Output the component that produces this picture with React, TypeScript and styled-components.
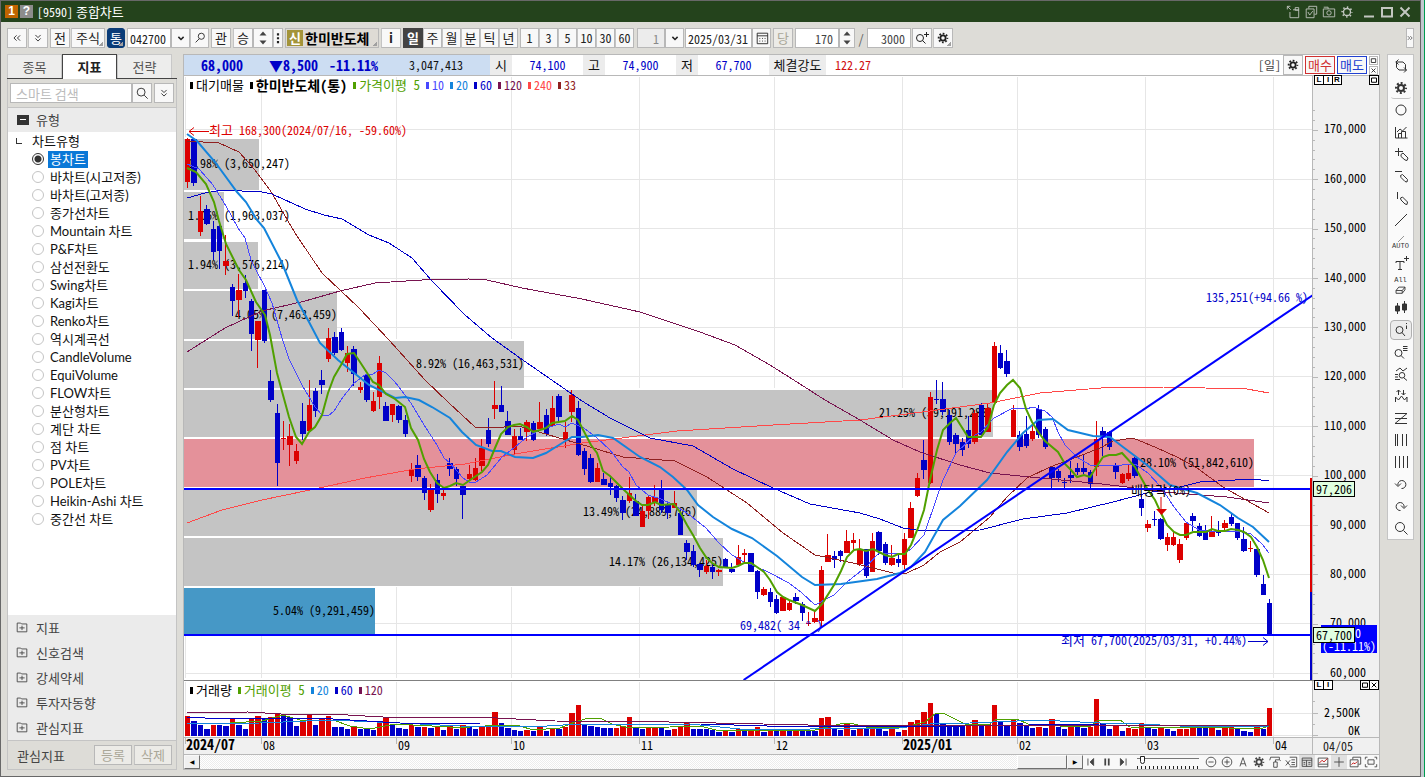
import React from "react";
import styled, { createGlobalStyle, css } from "styled-components";

const UI = '"Noto Sans CJK KR", sans-serif';
const MONO = '"Noto Sans Mono CJK KR", "Noto Sans CJK KR", monospace';

const RED = "#dc0000";
const BLUE = "#0000c8";

const GlobalStyle = createGlobalStyle`
  * { box-sizing: border-box; }
  body { margin: 0; background: #c4c8d0; font-family: ${UI}; font-size: 13px; color: #222; }
  button, input, select { font: inherit; color: inherit; margin: 0; padding: 0; border-radius: 0; }
  svg { display: block; }
`;

/* ---------- icons ---------- */

const ICONS: Record<string, React.ReactNode> = {
  gear: (
    <>
      <circle cx="8" cy="8" r="3" strokeWidth="2" />
      <circle cx="8" cy="8" r="5" strokeWidth="2" strokeDasharray="2 1.93" strokeDashoffset="1" />
    </>
  ),
  gearLine: (
    <>
      <circle cx="8" cy="8" r="4" strokeWidth="1.5" />
      <circle cx="8" cy="8" r="5.5" strokeWidth="2" strokeDasharray="1.6 2.72" strokeDashoffset="0.8" />
    </>
  ),
  left2: <path d="M7.5 5 4.5 8l3 3M11.5 5 8.5 8l3 3" />,
  right2: <path d="M4.5 5l3 3-3 3M8.5 5l3 3-3 3" />,
  down2: <path d="M5 4.5l3 3 3-3M5 8.500l3 3 3-3" />,
  chevron: <path d="M4.500 6.500 8 10l3.500-3.500" strokeWidth="2" />,
  searchLeft: <path d="M9.500 2.500a3.500 3.500 0 1 1 0 7 3.500 3.500 0 0 1 0-7zM7 9l-4 4" />,
  search: <path d="M7 2.500a4.500 4.500 0 1 1 0 9 4.500 4.500 0 0 1 0-9zM10.500 10.500l4 4" />,
  calendar: <path d="M2.500 2.500h12v12h-12zM2.500 5.500h12M5 8.500h1m2 0h1m2 0h1M5 11.500h1m2 0h1m2 0h1" />,
  zoomPlus: <path d="M6 4.500a3.500 3.500 0 1 1 0 7 3.500 3.500 0 0 1 0-7zM8.500 10.500l3 3M10 4.500h5M12.500 2v5" />,
  folderPlus: <path d="M2.500 3.500h4l1 1h6v9h-11zM5 9h6M8 6.500v5" />,
  popOut: <path d="M4.500 8v6.500h10v-9H8M1.500 1.500l4 4M1.500 5V1.500H5M10.500 3v3h4V3z" />,
  windows: <path d="M5.500 4V1.500h9v9H12M2.500 4.500h9v10h-9zM4.500 8 6.500 11.500l3.500-4.500" />,
  camera: <path d="M1.500 4.500h13v9h-13zM2 2.500h5v2M8 6.500a2.500 2.500 0 1 1 0 5 2.500 2.500 0 0 1 0-5" />,
  min: <path d="M3 12.500h10" strokeWidth="2" />,
  max: <path d="M3 4h10v8.500H3z" strokeWidth="2" />,
  close: <path d="M3.500 3.500l9 9M12.500 3.500l-9 9" strokeWidth="2" />,
  cycle: <path d="M3.500 4.500v5L6 12h7.500M12.500 11.500v-5L10 4H2.500M5.500 1.500 3 4l2.500 2.500M11 9.500l2.500 2.500-2.500 2.500" />,
  circle: <circle cx="8" cy="8" r="5" />,
  chartBars: <path d="M2.500 3v11h12M5.500 14V9.500h3V14M8.500 14V7.500h4V14M4 8l3-3 2.500 2 4-4" />,
  plusPen: <path d="M2 5.500h8M5.500 2v8M8 8.500l2-1.500 5 5-1 2.500-2-.5-4-3.500z" />,
  minusPen: <path d="M2 3.500h7M7.500 7.500l2-1 5 5-.5 2.500-2-.5-4-4z" />,
  linePen: <path d="M4.500 2v7M7.500 8l2-1 5 5-.5 2.500-2-.5-4-4z" />,
  slash: <path d="M2 14 14 2" />,
  textPlus: <path d="M3 5.500h8M3 5.500V7M11 5.500V7M7 5.500v8M5 13.500h4M11 2.500h5M13.500 0v5" />,
  eraser: <path d="M1.500 9.500l4-5h9v4l-4 5h-9zM1.500 9.500h9l4-5M10.500 9.500v4" strokeWidth="1.300" />,
  candles: <path d="M4.500 3v11M11.500 1v12M2.500 6h4v5h-4zM9.500 4h4v6h-4z" fill="#333" />,
  zoomInfo: <path d="M6.500 4.500a3.500 3.500 0 1 1 0 7 3.500 3.500 0 0 1 0-7zM9 10.500l3 3.500M13.500 3.500V7M13.500 1v1" />,
  zoomList: <path d="M5.500 5.500a3.500 3.500 0 1 1 0 7 3.500 3.500 0 0 1 0-7zM8 11.500l3 3M10 2.500h4.500M10 4.500h4.500M10 6.500h4.500" />,
  zoomWave: <path d="M3 5l4-3 3 3 4-3M9 6.500a2.800 2.800 0 1 1 0 5.600 2.800 2.800 0 0 1 0-5.600zM11 12l3 2.500M2 8.500h3M2 11h3M2 13.500h5" />,
  arrowsWave: <path d="M2.500 14V9l3 3 3-4 3 4 2.500-3v5M5.500 7V2M3.500 4l2-2 2 2M10.500 2v5M8.500 5l2 2 2-2" />,
  zigzag: <path d="M2 3.500h12M2 8.500h12M2 13.500h12M14 3.500l-12 10" />,
  bars4: <path d="M2.500 2v12M4.500 2v12M9.500 2v12M13.500 2v12" />,
  bars4b: <path d="M2.500 2v12M6.500 2v12M10.500 2v12M14.500 2v12" />,
  undo: <path d="M5 9.500a4 4 0 1 1 3.500 3M2 7.500 5 10.500 8 7.500" />,
  redo: <path d="M11 9.500a4 4 0 1 0-3.500 3M8 7.500l3 3 3-3" />,
  first: <path d="M4.500 4v8M11 4 7 8l4 4z" fill="#444" />,
  pause: <path d="M6 4v8M10 4v8" strokeWidth="2" />,
  last: <path d="M11.500 4v8M5 4l4 4-4 4z" fill="#444" />,
  zoomOut: <path d="M8 2.500a5.500 5.500 0 1 1 0 11 5.500 5.500 0 0 1 0-11zM5 8h6" />,
  zoomIn: <path d="M8 2.500a5.500 5.500 0 1 1 0 11 5.500 5.500 0 0 1 0-11zM5 8h6M8 5v6" />,
  letterA: <path d="M4.500 13 8 3l3.500 10M5.500 10h5" />,
  brush: <path d="M3 2.500h10v3H8.500V8M3 2.500 2 6M6.500 8h4v6h-4zM13 5.500l1.500 1" />,
  sheet: <path d="M6.500 2.500h8v11h-8M8.500 5.500h4M8.500 8.500h4M2 6l5 6M7 6l-5 6M8.500 11h4" />,
  table: <path d="M2.500 3.500h11v9.500h-11zM2.500 6h11M7.500 6v7M9.500 8.500h2.500M9.500 10.500h2.500M4 8.500h2M4 10.500h2" />,
  chartRed: (
    <>
      <path d="M2.500 3.500h11v10h-11zM2.500 10.500h11" />
      <path d="M4 9l3-3 2 2 4-4" stroke="#c00000" />
    </>
  ),
  plus: <path d="M2.500 8h11M8 2.500v11" />,
  chartStack: (
    <>
      <path d="M5.500 5V2.500h9v8H12M2.500 5.500h9v8h-9z" />
      <path d="M4 11l2-2 2 1 2.500-2.500" stroke="#c00000" />
    </>
  ),
  expand: <path d="M4.500 5.500h7v5h-7zM1.500 5V2.500H4M12 2.500h2.500V5M1.500 10.500v3H4M12 13.500h2.500v-3" />,
  updown: <path d="M8 1.500 11.500 5.500h-7zM8 14.500l3.500-4h-7z" fill="#444" stroke="none" />,
  dots: <path d="M8 2.500v2.500M8 7v2.500M8 11.500v2.500" strokeWidth="2.500" />,
};

const Glyph = styled.svg<{ $size: number }>`
  width: ${(p) => p.$size}px;
  height: ${(p) => p.$size}px;
  flex: none;
  fill: none;
  stroke: currentColor;
`;

const Icon = ({ name, size = 14 }: { name: string; size?: number }) => (
  <Glyph $size={size} viewBox="0 0 16 16" aria-hidden="true">
    {ICONS[name]}
  </Glyph>
);

/* ---------- window frame ---------- */

const Page = styled.div`
  height: 100vh;
  min-height: 620px;
  padding-right: 3px;
  border-right: 1px solid #009c50;
`;
const Window = styled.div`
  height: 100%;
  display: flex;
  flex-direction: column;
  border: 1px solid #686868;
  background: #dddcd7;
`;
const TitleBar = styled.header`
  height: 21px;
  flex: none;
  display: flex;
  align-items: center;
  padding: 0 6px 0 4px;
  background: #24431c;
  color: #fff;
`;
const Badge = styled.span<{ $bg: string }>`
  width: 13px;
  height: 13px;
  margin-right: 2px;
  display: grid;
  place-items: center;
  background: ${(p) => p.$bg};
  font: bold 12px/13px "Liberation Sans", sans-serif;
`;
const Title = styled.h1`
  flex: 1;
  margin: 0 0 0 2px;
  font: 400 13px/20px ${UI};
  span { font: 12px ${MONO}; }
`;
const TitleButton = styled.button<{ $gap?: boolean }>`
  width: 18px;
  height: 18px;
  margin-left: ${(p) => (p.$gap ? 4 : 0)}px;
  display: grid;
  place-items: center;
  border: 0;
  background: none;
  color: #c3c7c1;
`;

/* ---------- top tool bar ---------- */

const ToolBar = styled.div`
  height: 32px;
  flex: none;
  display: flex;
  align-items: center;
  padding: 0 6px;
`;
const Cluster = styled.div<{ $gap?: number; $ml?: number }>`
  display: flex;
  gap: ${(p) => p.$gap ?? 0}px;
  margin-left: ${(p) => p.$ml ?? 2}px;
`;
const ToolButton = styled.button<{ $w?: number; $look?: "dark" | "blue" | "off" | "stock"; $num?: boolean; $corner?: boolean }>`
  position: relative;
  width: ${(p) => p.$w ?? 20}px;
  height: 20px;
  flex: none;
  display: flex;
  align-items: center;
  justify-content: center;
  white-space: nowrap;
  border: 1px solid #b8b8b8;
  background: #f8f8f8;
  color: #222;
  line-height: 18px;
  & + & { border-left-color: #c4c4c4; }
  ${(p) => p.$num && css`font: 12px/18px ${MONO};`}
  ${(p) => p.$look === "dark" && css`background: #434343; border-color: #434343; color: #fff; font-weight: 700;`}
  ${(p) => p.$look === "blue" && css`background: #0a3c78; border-color: #0a3c78; color: #fff; && { border-radius: 3px; }`}
  ${(p) => p.$look === "off" && css`background: #ecebe7; color: #aaa798;`}
  ${(p) => p.$look === "stock" && css`background: #dedbd5; color: #000; font-size: 14px; font-weight: 700; justify-content: flex-start; gap: 2px;`}
  ${(p) => p.$corner && css`
    &::after {
      content: "";
      position: absolute;
      right: 1px;
      bottom: 1px;
      border: solid transparent;
      border-width: 4px 0 0 4px;
      border-bottom: 0;
      width: 4px;
      height: 4px;
      border-width: 0;
      background: linear-gradient(135deg, transparent 50%, #a0a0a0 50%);
    }
  `}
`;
const StockTag = styled.span`
  width: 16px;
  height: 16px;
  margin-left: 1px;
  text-align: center;
  background: #a39439;
  color: #fff;
  font-size: 13px;
  line-height: 15px;
`;
const Field = styled.input<{ $w: number; $align?: string }>`
  width: ${(p) => p.$w}px;
  height: 20px;
  flex: none;
  padding: 0 2px;
  border: 1px solid #b8b8b8;
  background: #fff;
  font-family: ${MONO};
  font-size: 12px;
  text-align: ${(p) => p.$align ?? "left"};
  ${(p) => p.$align === "right" && css`padding-right: 5px; color: #444;`}
  &:disabled { background: #ececec; color: #888; }
`;
const Slash = styled.span`
  width: 12px;
  text-align: center;
  color: #666;
`;
const Push = styled.span`flex: 1;`;

/* ---------- body ---------- */

const Body = styled.div`
  flex: 1;
  min-height: 0;
  display: grid;
  grid-template-columns: 170px minmax(0, 1fr) 27px;
  grid-template-rows: minmax(0, 1fr);
  padding: 0 6px 6px;
`;

const Sidebar = styled.aside`
  display: flex;
  flex-direction: column;
  min-height: 0;
  border-bottom: 1px solid #c4c4c4;
`;
const Tabs = styled.div`
  height: 25px;
  flex: none;
  display: flex;
  border-bottom: 1px solid #444;
`;
const Tab = styled.button<{ $on?: boolean }>`
  width: 55px;
  height: 24px;
  border: 1px solid #c8c8c8;
  border-bottom: 0;
  background: #ededec;
  color: #555;
  line-height: 20px;
  ${(p) => p.$on && css`height: 25px; background: #fff; border-color: #444; color: #222; font-weight: 700;`}
`;
const Panel = styled.div`
  flex: 1;
  min-height: 0;
  display: flex;
  flex-direction: column;
  border: solid #c4c4c4;
  border-width: 0 1px;
`;
const SearchRow = styled.form`
  height: 28px;
  flex: none;
  display: flex;
  align-items: center;
  padding: 0 3px 0 2px;
  input { width: 122px; padding: 0 5px; font: 13px ${UI}; }
  input::placeholder { color: #bbb; opacity: 1; }
`;
const Section = styled.button`
  height: 25px;
  flex: none;
  display: flex;
  align-items: center;
  gap: 7px;
  padding: 0 7px 1px;
  border: 0;
  background: #ebebeb;
  color: #444;
  text-align: left;
`;
const SectionHead = styled(Section)`border-top: 1px solid #c4c4c4;`;
const FolderSolid = styled.span`
  width: 12px;
  height: 10px;
  margin: 0 0 0 2px;
  display: grid;
  place-items: center;
  background: #333;
  &::after { content: ""; width: 6px; height: 1px; background: #fff; }
`;
const Tree = styled.div`
  flex: 1;
  min-height: 0;
  overflow: hidden;
  background: #fff;
  color: #111;
  font-family: Lato, ${UI};
`;
const TreeRoot = styled.div`
  height: 18px;
  display: flex;
  align-items: center;
  gap: 10px;
  padding-left: 8px;
  line-height: 18px;
  &::before { content: ""; width: 5px; height: 5px; border: solid #333; border-width: 0 0 1px 1px; }
`;
const TreeItem = styled.label<{ $on?: boolean }>`
  height: 18px;
  display: flex;
  align-items: center;
  gap: 4px;
  padding-left: 24px;
  span {
    padding: 0 2px;
    line-height: 17px;
    ${(p) => p.$on && css`background: #0a78d7; color: #fff;`}
  }
`;
const Radio = styled.input`
  appearance: none;
  width: 12px;
  height: 12px;
  border: 1px solid #c4c4c4;
  && { border-radius: 50%; }
  background: #fff;
  &:checked {
    border-color: #333;
    background: radial-gradient(circle, #333 0 3px, #fff 4px);
  }
`;
const SideFoot = styled.div`
  height: 29px;
  flex: none;
  display: flex;
  align-items: center;
  gap: 2px;
  padding: 0 4px 0 9px;
  border-top: 1px solid #c4c4c4;
  color: #444;
  span { flex: 1; }
`;

/* ---------- chart panel ---------- */

const Main = styled.main`
  min-width: 0;
  min-height: 0;
  margin: 0 7px 0 6px;
  display: flex;
  flex-direction: column;
  border: 1px solid #b8b8b8;
  background: #fff;
`;
const QuoteBar = styled.div`
  height: 21px;
  flex: none;
  display: flex;
  align-items: stretch;
  border-bottom: 1px solid #b8b8b8;
  font: 12px/20px ${MONO};
`;
const Summary = styled.div`
  width: 306px;
  display: flex;
  align-items: center;
  background: #ccddf2;
  color: ${BLUE};
  font-size: 14px;
  font-weight: 700;
`;
const SumCell = styled.span<{ $w: number; $plain?: boolean }>`
  width: ${(p) => p.$w}px;
  text-align: right;
  ${(p) => p.$plain && css`font-size: 12px; font-weight: 400; color: #111;`}
`;
const QName = styled.span<{ $w?: number }>`
  width: ${(p) => p.$w ?? 22}px;
  text-align: center;
  background: #ececec;
  color: #111;
  font: 13px/19px ${UI};
`;
const QValue = styled.span<{ $hot?: boolean }>`
  width: 71px;
  text-align: center;
  color: ${BLUE};
  ${(p) => p.$hot && css`padding-left: 9px; text-align: left; color: #d01010;`}
`;
const QTools = styled.div`
  margin-left: auto;
  display: flex;
  align-items: center;
  gap: 2px;
  color: #444;
`;
const TradeButton = styled.button<{ $c: string }>`
  width: 30px;
  height: 18px;
  border: 1px solid ${(p) => p.$c};
  background: #f8f8f8;
  color: ${(p) => p.$c};
  font: 13px/14px ${UI};
`;
const MiniStack = styled.div`
  display: grid;
  gap: 1px;
  margin-right: 1px;
`;
const MiniButton = styled.button`
  width: 9px;
  height: 9px;
  display: grid;
  place-items: center;
  border: 1px solid #b8b8b8;
  background: #fff;
  color: #222;
`;
const PaneRow = styled.div<{ $h?: number; $line?: string }>`
  position: relative;
  display: grid;
  grid-template-columns: minmax(0, 1fr) 66px;
  grid-template-rows: minmax(0, 1fr);
  border-bottom: 1px solid ${(p) => p.$line ?? "#b8b8b8"};
  ${(p) => (p.$h ? css`flex: none; height: ${p.$h}px;` : css`flex: 1; min-height: 0;`)}
`;
const Plot = styled.svg`
  width: 100%;
  height: 100%;
  font: 12px ${MONO};
`;
const Hangul = styled.tspan`font: 13px ${UI};`;
const Axis = styled(Plot)`
  width: 66px;
  background: #f0f0f0;
  box-shadow: -1px 0 0 #b8b8b8;
`;
const DateAxis = styled(Plot)`
  overflow: visible;
  background: #f0f0f0;
`;
const DateCell = styled.div`
  padding-left: 10px;
  background: #f0f0f0;
  box-shadow: -1px 0 0 #b8b8b8;
  font: 12px/16px ${MONO};
`;
const Legend = styled.div`
  position: absolute;
  top: 0;
  left: 6px;
  display: flex;
  gap: 6px;
  font: 12px/18px ${MONO};
`;
const Key = styled.span<{ $c: string; $size?: number }>`
  display: flex;
  align-items: center;
  gap: 3px;
  white-space: pre;
  color: ${(p) => p.$c};
  font-size: ${(p) => p.$size ?? 12}px;
  font-weight: ${(p) => (p.$size === 14 ? 700 : 400)};
  &::before { content: ""; width: 3px; height: 7px; background: currentColor; }
`;
const PaneTags = styled.div<{ $side: "left" | "right" }>`
  position: absolute;
  top: -1px;
  ${(p) => (p.$side === "left" ? "right: 37px; width: 28px;" : "right: 0;")}
  display: flex;
`;
const PaneTag = styled.button`
  width: 10px;
  height: 10px;
  margin-right: -1px;
  display: grid;
  place-items: center;
  border: 1px solid #000;
  background: #fff;
  color: #000;
  font: bold 8px/8px "Liberation Sans", sans-serif;
  &:last-child { margin-right: 0; }
`;

/* ---------- bottom bar ---------- */

const BottomBar = styled.div`
  height: 14px;
  flex: none;
  display: flex;
  background: #f8f8f8;
  color: #444;
`;
const ScrollArrow = styled.button`
  width: 16px;
  height: 14px;
  display: grid;
  place-items: center;
  border: 1px solid #f8f8f8;
  border-right-color: #707070;
  border-bottom-color: #707070;
  background: #f0f0f0;
  color: #000;
  font: 6px/10px "DejaVu Sans", sans-serif;
`;
const ScrollTrack = styled.div`
  flex: 1;
  display: flex;
  justify-content: flex-end;
  background: repeating-conic-gradient(#ececec 0 25%, #fff 0 50%) 0 0 / 2px 2px;
`;
const ScrollThumb = styled.div`
  width: 50px;
  border: 1px solid #fff;
  border-right-color: #707070;
  border-bottom-color: #707070;
  background: #f0f0f0;
`;
const BarButton = styled.button<{ $on?: boolean }>`
  width: 16px;
  height: 14px;
  display: grid;
  place-items: center;
  border: 0;
  background: ${(p) => (p.$on ? "#e0e0e0" : "none")};
`;
const Slider = styled.input`
  appearance: none;
  width: 62px;
  height: 14px;
  margin: 0 4px 0 6px;
  background:
    linear-gradient(#777, #777) 0 3px / 100% 1px no-repeat,
    repeating-linear-gradient(90deg, #222 0 1px, transparent 1px 4px) 0 11px / 100% 3px no-repeat;
  &::-webkit-slider-thumb {
    appearance: none;
    width: 5px;
    height: 8px;
    margin-top: -4px;
    border: 1px solid #222;
    background: #fff;
    border-radius: 0 0 3px 3px;
  }
`;

/* ---------- drawing tools ---------- */

const DrawBar = styled.nav`
  align-self: start;
  display: flex;
  flex-direction: column;
  align-items: center;
  border: 1px solid #c4c4c4;
  background: #fafafa;
`;
const DrawButton = styled.button<{ $on?: boolean; $line?: boolean }>`
  width: 22px;
  height: 20px;
  margin: 1px 0;
  display: flex;
  flex-direction: column;
  align-items: center;
  justify-content: center;
  border: 1px solid ${(p) => (p.$on ? "#b0b0b0" : "transparent")};
  && { border-radius: 4px; }
  background: ${(p) => (p.$on ? "#ececec" : "none")};
  color: #333;
  font: 7px/7px "Liberation Mono", monospace;
  ${(p) => p.$line && css`box-shadow: 0 2px 0 -1px #c4c4c4;`}
`;

/* ---------- data ---------- */

const STEP = 6.402;
const X0 = 187;
const BARS = 170;

// Each candle: direction, then the screen rows of high, body top, body bottom and low.
const CANDLES = `
r138,139,182,188 b139,139,183,186 r196,211,232,236 b205,209,224,225 b221,229,252,260 b225,226,251,269 r235,261,266,275
b284,287,301,316 r274,290,300,317 b275,283,291,298 b299,301,334,351 r321,321,340,368 b290,290,341,343 b370,381,400,402
b404,413,463,486 r421,438,439,450 r424,436,445,466 r444,451,461,464 b403,421,434,440 r380,405,431,432 b388,391,411,417
b370,380,385,394 r328,338,359,362 b332,337,353,355 b328,332,350,351 r346,353,363,372 b346,349,374,386 r382,387,390,393
b375,375,400,402 r392,401,411,412 r356,363,397,409 b402,406,421,421 r404,404,415,422 b405,406,420,423 b415,420,434,437
r463,470,476,482 b455,465,477,481 b476,478,493,500 r484,488,510,512 b474,480,494,503 r489,493,496,500 b458,463,469,476
b467,469,479,486 b486,486,495,519 r465,474,479,480 r458,468,480,481 r439,448,466,471 b418,430,444,447 r381,405,409,419
b386,405,412,412 b411,421,435,435 r429,436,450,455 b428,436,440,440 r420,422,432,441 b421,423,440,441 r402,422,429,429
b409,415,434,436 r396,408,426,426 b394,396,417,423 r422,432,440,448 r390,395,412,422 b401,408,455,456 b448,451,469,475
b454,458,482,483 r463,468,482,482 b473,479,485,485 b476,483,487,495 b485,486,498,502 b496,500,513,520 r477,493,501,503
b494,501,516,516 r506,511,527,527 r496,497,511,519 r485,497,502,506 b480,490,510,513 b501,504,513,519 r491,503,508,508
b508,513,535,535 b540,543,552,560 b545,551,565,567 b563,564,570,577 r560,566,572,574 b563,567,572,579 r569,570,572,576
b558,559,567,567 b563,569,572,573 r545,557,565,565 r549,553,555,563 b553,553,572,572 b570,571,592,599 r587,589,595,596
b588,592,602,607 b595,599,613,614 r597,597,611,611 r601,603,610,611 b593,597,601,604 b602,604,613,621 r612,623,624,626
r611,618,622,623 r566,570,621,628 r534,555,562,562 b551,556,560,568 b550,551,556,562 r530,541,553,553 r533,540,543,550
r539,549,564,566 b549,549,576,578 r533,541,572,572 b531,532,551,555 b542,544,563,565 r545,558,565,566 b553,559,563,567
r533,539,565,569 r502,508,538,538 r473,478,496,497 b440,460,470,479 r392,397,483,484 b380,399,400,404 b382,399,412,415
b410,415,442,445 b433,435,444,453 b438,442,450,456 b416,430,444,448 r410,413,442,444 b403,405,435,436 r403,408,432,432
r342,346,403,403 b345,353,368,369 b350,361,374,377 r405,410,437,437 b431,435,447,451 b416,434,446,448 r422,431,439,441
b405,409,435,438 b427,429,447,449 b466,467,478,488 b469,471,478,482 b478,482,483,488 b461,475,478,483 b463,468,472,475
b455,468,472,474 b470,472,484,488 r421,439,467,476 b427,431,437,456 b431,432,447,450 b463,466,472,479 r473,474,483,484
r465,473,479,481 b457,458,476,478 b495,499,508,516 r520,524,528,532 b511,519,520,526 b518,519,539,540 r533,537,545,551
r532,537,545,546 r539,544,560,563 r523,523,538,540 b513,516,521,531 b523,526,536,537 b525,530,540,540 r516,532,537,537
b521,531,533,536 r520,523,528,531 b514,517,524,526 b523,523,538,540 b527,539,551,552 r541,548,549,552 b549,549,575,577
b575,584,595,595 b599,603,634,634`
  .trim()
  .split(/\s+/)
  .map((c) => ({ up: c[0] === "r", v: c.slice(1).split(",").map(Number) }));

const VOLUMES = `
r20 b15 b11 b7 r11 b11 b10 r17 b11 b7 r17 r20 b18 r19 r23 b20 b19 b10 r16 r21 b11 r17 r20 b9 b9 b7 r9 b7 b7 b6 r15 r19 b11 b8 b7
r11 b9 r9 b8 r10 b6 r11 b7 r11 b9 b7 r9 r11 r24 b13 b8 b6 b5 r6 b5 r9 b5 r8 b7 r9 r23 r31 b12 b10 b9 b8 b8 r8 r10 r19 b9 b7 r8 r8
b8 b6 r7 r9 r13 b7 b7 b7 b6 b4 r5 b4 r7 b5 r5 r9 b4 r6 b5 r6 b5 r6 b5 b5 b5 r18 r19 b7 b6 r13 b6 r7 b7 r10 b7 b5 r7 b4 r6 r14 r16
r24 r33 b22 b12 b11 b11 b10 r12 r16 b11 r12 r31 b15 b10 r16 b13 b10 b8 r9 b8 r17 b9 b7 r10 b9 b8 r9 r37 b13 b7 r10 b5 r8 r7 r13
b8 b7 r9 b7 b5 r7 r7 r10 b9 b9 r10 b6 r8 r10 b7 b5 b4 r10 b7 r28`
  .trim()
  .split(/\s+/)
  .map((c) => ({ up: c[0] === "r", h: Number(c.slice(1)) }));

const AVERAGES: { c: string; w: number; p: string }[] = [
  { c: "#ff4848", w: 1, p: "187,523 222,510 262,500 310,490 365,478 415,469 465,464 515,454 582,443 677,431 773,425 860,420 930,411 990,403 1040,393 1113,387 1163,387 1247,389 1269,393" },
  { c: "#781450", w: 1, p: "187,352 225,328 262,311 305,301 340,291 375,283 422,280 469,279 487,280 522,288 582,299 640,312 700,332 735,345 770,365 800,384 825,400 860,420 893,440 920,452 960,465 990,473 1040,478 1093,483 1127,487 1163,492 1227,497 1269,503" },
  { c: "#902020", w: 1, p: "187,141 219,143 239,152 255,170 270,190 295,233 322,273 359,308 389,340 425,380 449,403 475,427 489,428 519,426 549,435 590,447 623,457 675,461 707,477 747,503 783,533 815,555 853,563 893,573 907,573 924,565 940,552 960,542 990,517 1007,497 1027,478 1050,467 1077,457 1100,448 1113,441 1133,438 1157,448 1177,457 1197,468 1223,487 1269,513" },
  { c: BLUE, w: 1, p: "187,198 205,193 222,190 262,192 272,194 305,209 324,215 342,219 369,235 389,243 412,258 432,281 465,315 492,338 520,358 582,401 610,418 650,438 693,446 733,469 773,488 810,504 860,513 880,519 903,528 923,531 980,530 1023,519 1067,513 1113,502 1147,493 1180,487 1200,482 1253,479 1269,481" },
  { c: "#4848ff", w: 1, p: "187,164 199,169 207,178 213,185 226,206 238,228 245,238 251,260 257,272 264,285 272,303 282,338 289,359 302,385 315,407 322,415 328,416 334,411 341,400 347,392 354,383 365,375 373,374 379,370 386,373 395,382 411,403 424,425 437,445 444,458 450,463 463,478 469,482 476,482 487,475 502,457 515,447 527,437 540,430 559,424 565,427 572,423 584,428 597,438 610,450 623,467 629,472 636,485 648,495 661,499 674,505 687,513 706,528 719,543 732,555 744,562 757,567 770,573 789,583 802,593 815,605 834,595 847,582 866,567 879,553 905,553 911,549 924,535 937,497 943,480 956,453 975,435 981,432 994,418 1013,408 1026,409 1033,407 1045,411 1052,417 1058,432 1065,445 1077,457 1090,465 1109,466 1135,464 1148,473 1161,487 1174,507 1186,522 1199,530 1218,532 1238,531 1251,534 1263,545 1269,553" },
  { c: "#1484dc", w: 2, p: "187,134 197,141 215,162 237,192 246,202 257,220 264,228 282,263 297,300 309,322 320,343 338,360 369,385 395,398 405,397 419,400 432,407 450,418 462,432 476,445 492,451 501,451 515,457 533,458 546,453 559,445 572,437 582,437 598,435 613,438 640,457 660,467 673,477 687,490 698,505 713,517 732,529 752,538 777,556 802,577 815,585 841,584 877,579 900,573 911,567 925,552 943,520 960,506 987,480 1007,452 1023,433 1038,420 1053,419 1068,430 1093,436 1110,437 1123,447 1147,465 1170,485 1197,493 1220,505 1238,518 1253,527 1269,542" },
  { c: "#50a000", w: 2, p: "187,168 196,172 206,184 214,202 219,221 226,244 239,270 246,280 256,302 265,315 270,335 277,373 289,417 296,437 302,444 309,432 315,427 322,415 328,393 334,377 341,365 347,354 354,353 360,362 373,382 379,385 386,394 395,399 405,407 411,428 418,440 424,459 430,472 437,483 444,488 450,486 456,483 463,485 476,476 482,472 488,465 495,448 501,434 508,427 514,425 520,424 527,427 533,432 540,430 546,428 552,423 565,421 572,416 578,420 591,445 597,453 603,471 610,476 623,489 636,501 642,505 648,505 655,502 661,505 674,504 680,512 687,525 693,535 700,548 706,557 712,563 719,567 732,568 738,566 744,563 751,563 757,567 764,572 770,580 777,592 783,597 789,600 802,605 815,611 822,604 834,585 841,571 847,557 854,550 860,549 866,551 873,549 879,552 885,555 892,557 898,554 905,554 911,545 918,528 924,510 930,480 937,450 943,430 950,423 956,418 968,437 981,437 988,427 994,405 1000,393 1007,385 1013,380 1020,388 1026,409 1032,422 1039,433 1045,441 1058,452 1065,464 1071,470 1077,477 1084,475 1090,477 1097,466 1103,457 1109,455 1116,455 1122,453 1135,467 1148,490 1155,500 1161,513 1167,525 1174,532 1180,535 1186,535 1193,532 1206,532 1212,529 1218,531 1225,531 1231,529 1238,530 1244,532 1251,537 1257,547 1263,560 1269,578" },
];

const VOLUME_AVERAGES = [
  { c: "#50a000", p: "187,724 230,723 262,721 283,715 300,720 333,720 350,726 370,729 395,724 450,727 470,727 500,725 520,726 533,730 560,728 575,722 585,719 600,718 612,724 630,728 670,727 700,726 720,731 760,730 815,730 840,724 850,723 870,728 905,727 925,722 936,713 945,714 965,724 990,724 995,720 1017,719 1030,725 1090,727 1098,720 1120,720 1130,727 1180,728 1200,727 1230,728 1260,729 1269,726" },
  { c: "#1484dc", p: "187,724 260,723 330,720 400,723 460,726 530,727 580,724 640,725 690,724 740,729 810,729 900,728 930,724 970,723 1040,720 1100,723 1140,724 1200,727 1269,726" },
  { c: BLUE, p: "187,717 223,719 283,718 333,719 400,723 480,724 700,724 800,727 960,726 1100,724 1269,724" },
  { c: "#781450", p: "187,713 248,712 281,714 330,714 383,717 477,717 555,721 669,722 763,724 808,725 1269,725" },
];

// Price-band profile: top, bottom, right edge, label, label row, colour.
const PROFILE: [number, number, number, string, number, string?][] = [
  [139, 190, 259, "1.98% (3,650,247)", 168],
  [192, 239, 224, "1.06% (1,963,037)", 220],
  [242, 289, 258, "1.94% (3,576,214)", 269],
  [291, 339, 337, "4.05% (7,463,459)", 319],
  [341, 388, 524, "8.92% (16,463,531)", 368],
  [390, 437, 993, "21.25% (39,191,283)", 417],
  [439, 487, 1254, "28.10% (51,842,610)", 467, "#e4919a"],
  [489, 536, 697, "13.49% (24,889,726)", 516],
  [538, 586, 723, "14.17% (26,134,425)", 566],
  [588, 635, 375, "5.04% (9,291,459)", 615, "#4698c6"],
];

const MONTHS: [number, string][] = [
  [185, "2024/07"], [261, "08"], [396, "09"], [511, "10"], [639, "11"],
  [774, "12"], [902, "2025/01"], [1017, "02"], [1145, "03"], [1273, "04"],
];
const PRICES: [number, string][] = [
  [129, "170,000"], [179, "160,000"], [228, "150,000"], [278, "140,000"], [327, "130,000"], [376, "120,000"],
  [426, "110,000"], [475, "100,000"], [525, "90,000"], [574, "80,000"], [623, "70,000"], [673, "60,000"],
];

const CHART_TYPES = [
  "봉차트", "바차트(시고저종)", "바차트(고저종)", "종가선차트", "Mountain 차트", "P&F차트", "삼선전환도", "Swing차트",
  "Kagi차트", "Renko차트", "역시계곡선", "CandleVolume", "EquiVolume", "FLOW차트", "분산형차트", "계단 차트", "점 차트",
  "PV차트", "POLE차트", "Heikin-Ashi 차트", "중간선 차트",
];

const barLeft = (i: number) => Math.round(X0 - 2 + STEP * i);
const barWidth = (i: number) => barLeft(i + 1) - barLeft(i) - 1;

/* ---------- chart parts ---------- */

const PricePlot = () => (
  <Plot viewBox="184 76 1129 604" preserveAspectRatio="xMinYMin meet" role="img" aria-label="가격 차트">
    <g stroke="#e6e6e6" shapeRendering="crispEdges">
      {MONTHS.map(([x]) => <line key={x} x1={x + 0.5} x2={x + 0.5} y1="77" y2="678" />)}
      {PRICES.map(([y]) => <line key={y} x1="185" x2="1313" y1={y + 0.5} y2={y + 0.5} />)}
    </g>
    {PROFILE.map(([top, bottom, right, label, row, color]) => (
      <g key={label}>
        <rect x="184" y={top - 2} width={right - 184} height={bottom - top + 3} fill="#fff" />
        <rect x="184" y={top} width={right - 184} height={bottom - top} fill={color ?? "#c4c4c4"} />
        <text x={Math.max(right, 290)} y={row} textAnchor="end">{label}</text>
      </g>
    ))}
    <g shapeRendering="crispEdges">
      {CANDLES.map(({ up, v }, i) => (
        <g key={i} fill={up ? RED : BLUE}>
          <rect x={barLeft(i) + 2} y={v[0]} width="1" height={v[3] - v[0]} />
          <rect x={barLeft(i)} y={v[1]} width={barWidth(i)} height={v[2] - v[1]} />
        </g>
      ))}
    </g>
    <g fill="none">
      {AVERAGES.map((a) => (
        <polyline
          key={a.c}
          points={a.p}
          stroke={a.c}
          strokeWidth={a.w}
          shapeRendering={a.w === 1 ? "crispEdges" : "auto"}
        />
      ))}
    </g>
    <g fill={RED}>
      <path d="M209 131.500H189M194 127.500l-5 4 5 4" fill="none" stroke={RED} />
      <text x="209" y="135"><Hangul>최고</Hangul> 168,300(2024/07/16, -59.60%)</text>
      <path d="M1161 497v13" stroke={RED} />
      <path d="M1156 509h11l-5.500 6z" />
    </g>
    <text x="1131" y="495"><Hangul>배당락</Hangul>(0%)</text>
    <g fill={BLUE}>
      <text x="1308" y="302" textAnchor="end">135,251(+94.66 %)</text>
      <text x="740" y="630">69,482( 34 ° )</text>
      <text x="1061" y="645"><Hangul>최저</Hangul> 67,700(2025/03/31, +0.44%)</text>
      <path d="M1248 641.500h20M1263 637.500l5 4-5 4" fill="none" stroke={BLUE} />
    </g>
    <g fill="none" stroke="#0000ff" strokeWidth="2">
      <path d="M184 489h1129M184 635h1129" shapeRendering="crispEdges" />
      <path d="M743.600 680 1313 295" />
    </g>
    <rect x="1310" y="478" width="3" height="114" fill={RED} />
    <rect x="1310" y="592" width="3" height="88" fill={BLUE} />
  </Plot>
);

const PriceAxis = () => (
  <Axis viewBox="1313 76 66 604" preserveAspectRatio="xMinYMin meet" role="img" aria-label="가격 축">
    <g stroke="#b8b8b8" shapeRendering="crispEdges">
      {Array.from({ length: 58 }, (_, i) => {
        const y = Math.round(110 + i * 9.88) + 0.5;
        return <line key={i} x1="1313" x2={i % 5 === 2 ? 1318 : 1315} y1={y} y2={y} />;
      })}
    </g>
    {PRICES.map(([y, t]) => <text key={t} x="1366" y={y + 4} textAnchor="end">{t}</text>)}
    <rect x="1321" y="625" width="56" height="28" fill="#00f" />
    <text x="1361" y="638" fill="#fff" textAnchor="end">67,700</text>
    <text x="1376" y="651" fill="#fff" textAnchor="end">(-11.11%)</text>
    <g shapeRendering="crispEdges">
      <rect x="1313.500" y="481.500" width="41" height="15" fill="#e0ffe0" stroke="#000" />
      <rect x="1313.500" y="627.500" width="41" height="15" fill="#e0ffe0" stroke="#000" />
    </g>
    <text x="1316" y="494">97,206</text>
    <text x="1316" y="640">67,700</text>
  </Axis>
);

const VolumePlot = () => (
  <Plot viewBox="184 681 1129 56" preserveAspectRatio="xMinYMax meet" role="img" aria-label="거래량 차트">
    <g stroke="#e6e6e6" shapeRendering="crispEdges">
      {MONTHS.map(([x]) => <line key={x} x1={x + 0.5} x2={x + 0.5} y1="682" y2="737" />)}
      <line x1="185" x2="1313" y1="713.500" y2="713.500" />
      <line x1="185" x2="1313" y1="735.500" y2="735.500" />
    </g>
    <g shapeRendering="crispEdges">
      {VOLUMES.slice(0, BARS).map(({ up, h }, i) => (
        <rect key={i} x={barLeft(i)} y={736 - h} width={barWidth(i)} height={h} fill={up ? RED : BLUE} />
      ))}
      {VOLUME_AVERAGES.map((a) => <polyline key={a.c} points={a.p} stroke={a.c} fill="none" />)}
    </g>
  </Plot>
);

const VolumeAxis = () => (
  <Axis viewBox="1313 681 66 56" role="img" aria-label="거래량 축">
    <path d="M1313 701.500h2M1313 713.500h5M1313 724.500h2M1313 735.500h5" stroke="#b8b8b8" />
    <text x="1360" y="717" textAnchor="end">2,500K</text>
    <text x="1360" y="735" textAnchor="end">0K</text>
  </Axis>
);

const Dates = () => (
  <DateAxis viewBox="184 738 1129 16" preserveAspectRatio="xMinYMin meet" role="img" aria-label="날짜 축">
    {MONTHS.map(([x, t]) => (
      <g key={x}>
        <line x1={x + 0.5} x2={x + 0.5} y1="738" y2="744" stroke="#b8b8b8" />
        <text
          x={x + (t.length > 2 ? 1 : 2)}
          y="750"
          fontWeight={t.length > 2 ? 700 : 400}
          fontSize={t.length > 2 ? 14 : 12}
        >
          {t}
        </text>
      </g>
    ))}
  </DateAxis>
);

/* ---------- page ---------- */

const DRAW_TOOLS = [
  "cycle", "gear", "circle", "chartBars", "plusPen", "minusPen", "linePen", "slash", "auto", "textPlus", "all",
  "candles", "zoomInfo", "zoomList", "zoomWave", "arrowsWave", "zigzag", "bars4", "bars4b", "undo", "redo", "search",
];
const BOTTOM_TOOLS = [
  "zoomOut", "zoomIn", "letterA", "gear", "brush", "sheet", "table", "chartRed", "plus", "chartStack", "expand",
];
const TITLE_TOOLS = ["popOut", "windows", "camera", "gearLine"];

const drawContent = (name: string) => {
  if (name === "auto") return <><Icon name="slash" size={8} />AUTO</>;
  if (name === "all") return <>All<Icon name="eraser" size={11} /></>;
  return <Icon name={name} size={16} />;
};

export default function App() {
  return (
    <Page>
      <GlobalStyle />
      <Window>
        <TitleBar>
          <Badge $bg="#c06400">1</Badge>
          <Badge $bg="#8c8c8c">?</Badge>
          <Title><span>[9590]</span> 종합차트</Title>
          {TITLE_TOOLS.map((n) => <TitleButton key={n} aria-label={n}><Icon name={n} /></TitleButton>)}
          <TitleButton $gap aria-label="최소화"><Icon name="min" size={16} /></TitleButton>
          <TitleButton aria-label="최대화"><Icon name="max" size={16} /></TitleButton>
          <TitleButton aria-label="닫기"><Icon name="close" size={16} /></TitleButton>
        </TitleBar>

        <ToolBar>
          <Cluster $gap={1} $ml={0}>
            <ToolButton aria-label="접기"><Icon name="left2" /></ToolButton>
            <ToolButton aria-label="펼치기"><Icon name="down2" /></ToolButton>
          </Cluster>
          <Cluster $gap={1}>
            <ToolButton>전</ToolButton>
            <ToolButton $w={34} $corner>주식</ToolButton>
          </Cluster>
          <Cluster><ToolButton $w={18} $look="blue" $corner>통</ToolButton></Cluster>
          <Cluster>
            <Field $w={44} defaultValue="042700" aria-label="종목코드" />
            <ToolButton $w={19} aria-label="종목 목록"><Icon name="chevron" size={12} /></ToolButton>
            <ToolButton $w={19} aria-label="종목 검색"><Icon name="searchLeft" /></ToolButton>
          </Cluster>
          <Cluster $gap={2}>
            <ToolButton>관</ToolButton>
            <ToolButton>승</ToolButton>
          </Cluster>
          <Cluster $ml={0}>
            <ToolButton aria-label="종목 이동"><Icon name="updown" size={16} /></ToolButton>
            <ToolButton $w={10} aria-label="더보기"><Icon name="dots" /></ToolButton>
          </Cluster>
          <Cluster $gap={2}>
            <ToolButton $w={94} $look="stock" $corner><StockTag>신</StockTag>한미반도체</ToolButton>
            <ToolButton><b>i</b></ToolButton>
          </Cluster>
          <Cluster>
            <ToolButton $look="dark">일</ToolButton>
            {["주", "월", "분", "틱", "년"].map((t) => <ToolButton key={t} $w={19}>{t}</ToolButton>)}
          </Cluster>
          <Cluster>
            {["1", "3", "5", "10", "30", "60"].map((t) => <ToolButton key={t} $w={19} $num>{t}</ToolButton>)}
          </Cluster>
          <Cluster $ml={3}>
            <Field $w={28} $align="right" defaultValue="1" disabled aria-label="주기" />
            <ToolButton $w={19} aria-label="주기 선택"><Icon name="chevron" size={12} /></ToolButton>
          </Cluster>
          <Cluster $ml={1}>
            <Field $w={67} defaultValue="2025/03/31" aria-label="기준일" />
            <ToolButton $w={19} aria-label="달력"><Icon name="calendar" /></ToolButton>
          </Cluster>
          <Cluster><ToolButton $look="off">당</ToolButton></Cluster>
          <Cluster>
            <Field $w={44} $align="right" defaultValue="170" aria-label="표시 봉수" />
            <ToolButton $w={16} aria-label="봉수 조절"><Icon name="updown" size={16} /></ToolButton>
          </Cluster>
          <Slash>/</Slash>
          <Cluster $ml={0} $gap={1}>
            <Field $w={44} $align="right" defaultValue="3000" aria-label="전체 봉수" />
            <ToolButton aria-label="확대"><Icon name="zoomPlus" size={16} /></ToolButton>
            <ToolButton $corner aria-label="설정"><Icon name="gear" /></ToolButton>
          </Cluster>
          <Push />
          <ToolButton $w={8} aria-label="더 보기"><Icon name="right2" size={10} /></ToolButton>
        </ToolBar>

        <Body>
          <Sidebar>
            <Tabs>
              <Tab>종목</Tab>
              <Tab $on>지표</Tab>
              <Tab>전략</Tab>
            </Tabs>
            <Panel>
              <SearchRow>
                <Field $w={122} placeholder="스마트 검색" aria-label="스마트 검색" />
                <ToolButton type="button" $w={20} aria-label="검색"><Icon name="search" /></ToolButton>
                <Cluster><ToolButton type="button" aria-label="펼치기"><Icon name="down2" /></ToolButton></Cluster>
              </SearchRow>
              <SectionHead><FolderSolid />유형</SectionHead>
              <Tree>
                <TreeRoot>차트유형</TreeRoot>
                {CHART_TYPES.map((t, i) => (
                  <TreeItem key={t} $on={i === 0}>
                    <Radio type="radio" name="chartType" defaultChecked={i === 0} />
                    <span>{t}</span>
                  </TreeItem>
                ))}
              </Tree>
              {["지표", "신호검색", "강세약세", "투자자동향", "관심지표"].map((t) => (
                <Section key={t}><Icon name="folderPlus" />{t}</Section>
              ))}
              <SideFoot>
                <span>관심지표</span>
                <ToolButton $w={38} $look="off">등록</ToolButton>
                <ToolButton $w={38} $look="off">삭제</ToolButton>
              </SideFoot>
            </Panel>
          </Sidebar>

          <Main>
            <QuoteBar>
              <Summary>
                <SumCell $w={59}>68,000</SumCell>
                <SumCell $w={75}>▼8,500</SumCell>
                <SumCell $w={60}>-11.11%</SumCell>
                <SumCell $w={85} $plain>3,047,413</SumCell>
              </Summary>
              <QName>시</QName><QValue>74,100</QValue>
              <QName>고</QName><QValue>74,900</QValue>
              <QName>저</QName><QValue>67,700</QValue>
              <QName $w={57}>체결강도</QName><QValue $hot>122.27</QValue>
              <QTools>
                <span>[일]</span>
                <ToolButton aria-label="차트 설정"><Icon name="gear" /></ToolButton>
                <TradeButton $c="#d03030">매수</TradeButton>
                <TradeButton $c="#2040d0">매도</TradeButton>
                <MiniStack>
                  <MiniButton aria-label="최대화"><Icon name="max" size={7} /></MiniButton>
                  <MiniButton aria-label="닫기"><Icon name="close" size={7} /></MiniButton>
                </MiniStack>
              </QTools>
            </QuoteBar>

            <PaneRow $line="#808080">
              <PricePlot />
              <PriceAxis />
              <Legend>
                <Key $c="#000" $size={13}>대기매물</Key>
                <Key $c="#000" $size={14}>한미반도체(통)</Key>
                <Key $c="#50a000" $size={13}>가격이평 5</Key>
                <Key $c="#4848ff">10</Key>
                <Key $c="#1484dc">20</Key>
                <Key $c={BLUE}>60</Key>
                <Key $c="#781450">120</Key>
                <Key $c="#ff4848">240</Key>
                <Key $c="#902020">33</Key>
              </Legend>
              <PaneTags $side="left"><PaneTag>L</PaneTag><PaneTag>I</PaneTag><PaneTag>R</PaneTag></PaneTags>
              <PaneTags $side="right"><PaneTag aria-label="최대화"><Icon name="max" size={8} /></PaneTag></PaneTags>
            </PaneRow>

            <PaneRow $h={57}>
              <VolumePlot />
              <VolumeAxis />
              <Legend>
                <Key $c="#000" $size={13}>거래량</Key>
                <Key $c="#50a000" $size={13}>거래이평 5</Key>
                <Key $c="#1484dc">20</Key>
                <Key $c={BLUE}>60</Key>
                <Key $c="#781450">120</Key>
              </Legend>
              <PaneTags $side="left"><PaneTag>L</PaneTag><PaneTag>I</PaneTag></PaneTags>
              <PaneTags $side="right">
                <PaneTag aria-label="최대화"><Icon name="max" size={8} /></PaneTag>
                <PaneTag aria-label="닫기"><Icon name="close" size={8} /></PaneTag>
              </PaneTags>
            </PaneRow>

            <PaneRow $h={17}>
              <Dates />
              <DateCell>04/05</DateCell>
            </PaneRow>

            <BottomBar>
              <ScrollArrow aria-label="왼쪽으로">◀</ScrollArrow>
              <ScrollTrack><ScrollThumb /></ScrollTrack>
              <ScrollArrow aria-label="오른쪽으로">▶</ScrollArrow>
              {["first", "pause", "last"].map((n) => <BarButton key={n} aria-label={n}><Icon name={n} size={14} /></BarButton>)}
              <Slider type="range" min="0" max="100" defaultValue="6" aria-label="재생 속도" />
              {BOTTOM_TOOLS.map((n) => (
                <BarButton key={n} $on={n === "table" || n === "plus"} aria-label={n}><Icon name={n} size={14} /></BarButton>
              ))}
            </BottomBar>
          </Main>

          <DrawBar>
            {DRAW_TOOLS.map((n) => (
              <DrawButton key={n} $on={n === "zoomInfo"} $line={n === "gear"} aria-label={n}>{drawContent(n)}</DrawButton>
            ))}
          </DrawBar>
        </Body>
      </Window>
    </Page>
  );
}
